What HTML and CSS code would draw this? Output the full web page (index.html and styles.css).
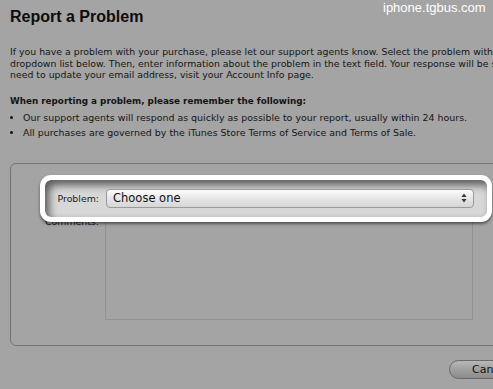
FILE: index.html
```html
<!DOCTYPE html>
<html lang="en">
<head>
    <meta charset="UTF-8">
    <title>Report a Problem</title>
    <link rel="stylesheet" href="styles.css">
</head>
<body>
    <div class="watermark">iphone.tgbus.com</div>

    <div class="page">
        <h1>Report a Problem</h1>

        <p class="intro">
            If you have a problem with your purchase, please let our support agents know. Select the problem with the<br>
            dropdown list below. Then, enter information about the problem in the text field. Your response will be sent to<br>
            need to update your email address, visit your Account Info page.
        </p>

        <h2>When reporting a problem, please remember the following:</h2>
        <ul class="notes">
            <li>Our support agents will respond as quickly as possible to your report, usually within 24 hours.</li>
            <li>All purchases are governed by the iTunes Store Terms of Service and Terms of Sale.</li>
        </ul>

        <!-- formulario com o campo em destaque -->
        <form class="report-box">
            <div class="highlight">
                <div class="row">
                    <label for="problem">Problem:</label>
                    <div class="select">
                        <span>Choose one</span>
                        <svg width="6" height="10" viewBox="0 0 6 10">
                            <path d="M3 0.5 L5.5 4 L0.5 4 Z M3 9.5 L5.5 6 L0.5 6 Z" fill="#333"/>
                        </svg>
                    </div>
                </div>
            </div>
            <div class="row comments">
                <label for="comments">Comments:</label>
                <textarea id="comments"></textarea>
            </div>
        </form>

        <div class="actions">
            <button type="button">Cancel</button>
        </div>
    </div>
</body>
</html>
```

FILE: styles.css
```css
html, body {
    overflow: hidden;
}

body {
    margin: 0;
    background-color: #a4a4a4;
    color: #141414;
    font-family: 'DejaVu Sans', sans-serif;
    position: relative;
}

.watermark {
    position: absolute;
    top: 0;
    left: 383px;
    font-family: 'Liberation Sans', Arial, sans-serif;
    font-size: 13px;
    color: #fff;
    z-index: 5;
}

.page {
    width: 600px;
    padding: 6px 10px;
}

h1 {
    margin: 0;
    font-family: 'Liberation Sans', Arial, sans-serif;
    font-size: 16px;
    font-weight: bold;
    color: #0c0c0c;
    line-height: 22px;
}

.intro {
    margin: 18px 0 0;
    font-size: 9.35px;
    line-height: 11.5px;
    white-space: nowrap;
}

h2 {
    margin: 14px 0 0;
    font-size: 8.8px;
    line-height: 12px;
}

.notes {
    margin: 3px 0 0;
    padding-left: 13px;
    font-size: 9.45px;
    line-height: 15px;
}

.report-box {
    margin-top: 23px;
    width: 540px;
    height: 183px;
    border: 1px solid #747474;
    border-radius: 6px;
    padding-top: 11px;
    box-sizing: border-box;
}

.highlight {
    position: relative;
    z-index: 2;
    margin-left: 29px;
    width: 452px;
    height: 47px;
    box-sizing: border-box;
    border: 5px solid #fff;
    border-radius: 11px;
    background: #d8d8d8;
    box-shadow: inset 4px 5px 8px rgba(0, 0, 0, 0.6), 0 2px 3px rgba(0, 0, 0, 0.5);
    margin-bottom: -8px;
}

.row {
    display: flex;
    align-items: flex-start;
}

.highlight .row {
    padding: 9px 0 0 9px;
    align-items: center;
}

.row label {
    width: 45px;
    text-align: right;
    font-size: 9.4px;
    color: #222;
    margin-right: 7px;
}

.select {
    width: 368px;
    height: 19px;
    box-sizing: border-box;
    border: 1px solid #9a9a9a;
    border-radius: 4px;
    background: linear-gradient(#fdfdfd, #e4e4e4 55%, #d6d6d6);
    display: flex;
    align-items: center;
    justify-content: space-between;
    padding: 0 6px 0 6px;
    font-size: 11.5px;
    color: #111;
}

.comments {
    padding-left: 0;
}

.comments label {
    width: 88px;
    margin-right: 6px;
    padding-top: 2px;
    color: #1a1a1a;
}

.comments textarea {
    width: 368px;
    height: 106px;
    box-sizing: border-box;
    background: #a4a4a4;
    border: 1px solid #929292;
    resize: none;
    margin: 0;
}

.actions {
    width: 483px;
    display: flex;
    justify-content: flex-end;
    margin-top: 14px;
}

.actions button {
    margin-right: -56px;
    width: 100px;
    height: 19px;
    border-radius: 10px;
    border: 1px solid #6a6a6a;
    background: linear-gradient(#b8b8b8, #a0a0a0 50%, #8c8c8c);
    font-family: 'DejaVu Sans', sans-serif;
    font-size: 11px;
    color: #111;
    text-align: left;
    padding-left: 22px;
}
```
